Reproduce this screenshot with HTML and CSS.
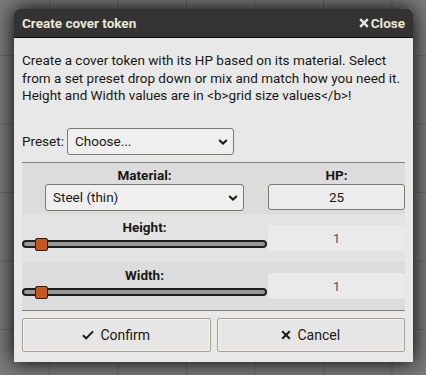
FILE: index.html
```html
<!DOCTYPE html>
<html lang="en">
  <head>
    <meta charset="utf-8">
    <meta name="viewport" content="width=device-width, initial-scale=1">
    <title>Create cover token</title>
    <link rel="stylesheet" href="styles.css">
  </head>
  <body>
    <div class="app dialog">
      <header class="window-header">
        <h4 class="window-title">Create cover token</h4>
        <a class="header-button">
          <svg class="icon-close" viewBox="0 0 10 10" width="10" height="10"><path d="M1.2 1.2 8.8 8.8M8.8 1.2 1.2 8.8"/></svg>Close
        </a>
      </header>
      <section class="window-content">
        <p>Create a cover token with its HP based on its material. Select from a set preset drop down or mix and match how you need it. Height and Width values are in &lt;b&gt;grid size values&lt;/b&gt;!</p>

        <div class="form-group preset">
          <label>Preset:</label>
          <div class="select-wrap preset-select">
            <select>
              <option>Choose...</option>
            </select>
            <svg class="chevron" viewBox="0 0 10 6" width="10" height="6"><path d="M1.2 1 5 4.6 8.8 1"/></svg>
          </div>
        </div>

        <div class="cover-table">
          <div class="cover-row dark first">
            <div class="cell">
              <span class="head">Material:</span>
              <div class="select-wrap material-select">
                <select>
                  <option>Steel (thin)</option>
                </select>
                <svg class="chevron" viewBox="0 0 10 6" width="10" height="6"><path d="M1.2 1 5 4.6 8.8 1"/></svg>
              </div>
            </div>
            <div class="cell">
              <span class="head">HP:</span>
              <input class="hp" type="text" value="25">
            </div>
          </div>

          <div class="cover-row">
            <div class="cell slider-cell">
              <span class="head">Height:</span>
              <input class="slider" type="range" min="0.5" max="11" step="0.5" value="1">
            </div>
            <div class="cell value">
              <span class="range-value">1</span>
            </div>
          </div>

          <div class="cover-row dark">
            <div class="cell slider-cell">
              <span class="head">Width:</span>
              <input class="slider" type="range" min="0.5" max="11" step="0.5" value="1">
            </div>
            <div class="cell value">
              <span class="range-value">1</span>
            </div>
          </div>
        </div>

        <footer class="dialog-buttons">
          <button class="dialog-button">
            <svg class="icon" viewBox="0 0 12 10" width="12" height="10"><path d="M1 5.2 4.2 8.4 11 1.4"/></svg>
            Confirm
          </button>
          <button class="dialog-button">
            <svg class="icon" viewBox="0 0 10 10" width="10" height="10"><path d="M1.2 1.2 8.8 8.8M8.8 1.2 1.2 8.8"/></svg>
            Cancel
          </button>
        </footer>
      </section>
    </div>
  </body>
</html>
```

FILE: styles.css
```css
html, body {
  margin: 0;
  height: 100%;
}
body {
  padding: 9px 0 0 14px;
  box-sizing: border-box;
  font-size: 13.5px;
  font-family: Roboto, "Liberation Sans", sans-serif;
  color: #191813;
  background-color: #7a7a7a;
  background-image:
    linear-gradient(to right, rgba(0, 0, 0, 0.16) 1px, transparent 1px),
    linear-gradient(to bottom, rgba(0, 0, 0, 0.16) 1px, transparent 1px);
  background-size: 68.5px 68.5px;
  background-position: 49px 55px;
}

.app {
  width: 399px;
  height: 353px;
  display: flex;
  flex-direction: column;
  border-radius: 5px 5px 0 0;
  background: #e8e8e8;
  box-shadow: 0 0 20px #000;
  overflow: hidden;
}

.window-header {
  flex: 0 0 28px;
  display: flex;
  align-items: center;
  padding: 0 8px;
  background: #333;
  border-bottom: 1px solid #0d0d0d;
  color: #eae7d6;
}
.window-title {
  flex: 1;
  margin: 0;
  font-size: 13.5px;
  font-weight: bold;
}
.header-button {
  display: flex;
  align-items: center;
  gap: 2px;
  font-weight: bold;
  cursor: pointer;
}
.icon-close {
  width: 10px;
  height: 10px;
  fill: none;
  stroke: #eae7d6;
  stroke-width: 2.4;
}

.window-content {
  flex: 1;
  padding: 8px 8px 0;
}
.window-content p {
  margin: 6px 0 0;
  line-height: 17.5px;
}

.form-group {
  display: flex;
  align-items: center;
  margin-top: 23px;
}
.form-group label {
  flex: 0 0 45px;
}

.select-wrap {
  position: relative;
}
.select-wrap select {
  display: block;
  width: 100%;
  height: 27px;
  margin: 0;
  padding: 0 7px;
  appearance: none;
  -webkit-appearance: none;
  font: inherit;
  color: #191813;
  background: #efefef;
  border: 1px solid #7a7971;
  border-radius: 3px;
}
.chevron {
  position: absolute;
  right: 6px;
  top: 11px;
  fill: none;
  stroke: #191813;
  stroke-width: 2;
  pointer-events: none;
}
.preset-select {
  width: 167px;
}
.material-select {
  width: 199px;
  margin: 0 auto;
}

.cover-table {
  margin-top: 7px;
  border-top: 1px solid #7f7f7f;
  border-bottom: 1px solid #7f7f7f;
}
.cover-row {
  display: grid;
  grid-template-columns: 245px 1fr;
  column-gap: 1px;
  height: 48px;
  background: #e3e3e3;
}
.cover-row.dark {
  background: #dcdcdc;
}
.cover-row.first {
  height: 51px;
}
.cell {
  display: flex;
  flex-direction: column;
  padding-top: 4px;
}
.cell.slider-cell {
  padding-top: 5px;
}
.cell.value {
  padding: 0;
  justify-content: center;
}
.head {
  display: block;
  height: 17px;
  line-height: 17px;
  text-align: center;
  font-weight: bold;
}

.hp {
  box-sizing: border-box;
  width: 100%;
  height: 26px;
  margin: 0;
  padding: 0;
  font: inherit;
  text-align: center;
  color: #191813;
  background: #ececec;
  border: 1px solid #7a7971;
  border-radius: 3px;
}

.range-value {
  display: block;
  height: 26px;
  line-height: 26px;
  text-align: center;
  color: #555;
  background: #eaeaea;
  border-radius: 3px;
}

.slider {
  -webkit-appearance: none;
  appearance: none;
  width: 245px;
  height: 15px;
  margin: 1px 0 0;
  background: transparent;
}
.slider::-webkit-slider-runnable-track {
  height: 8px;
  box-sizing: border-box;
  background: #999;
  border: 2px solid #1e1e1e;
  border-radius: 4px;
}
.slider::-webkit-slider-thumb {
  -webkit-appearance: none;
  width: 13px;
  height: 13px;
  margin-top: -4.5px;
  box-sizing: border-box;
  background: #c9561c;
  border: 1px solid #222;
  border-radius: 2px;
}

.dialog-buttons {
  display: flex;
  gap: 6px;
  margin-top: 7px;
}
.dialog-button {
  flex: 1;
  height: 34px;
  display: flex;
  align-items: center;
  justify-content: center;
  gap: 6px;
  font: inherit;
  font-size: 14px;
  color: #191813;
  background: #e6e6e6;
  border: 1px solid #a3a293;
  box-shadow: inset 0 0 0 1px #f1f0e6;
  border-radius: 2px;
  cursor: pointer;
}
.dialog-button .icon {
  fill: none;
  stroke: #191813;
  stroke-width: 2;
}
```
